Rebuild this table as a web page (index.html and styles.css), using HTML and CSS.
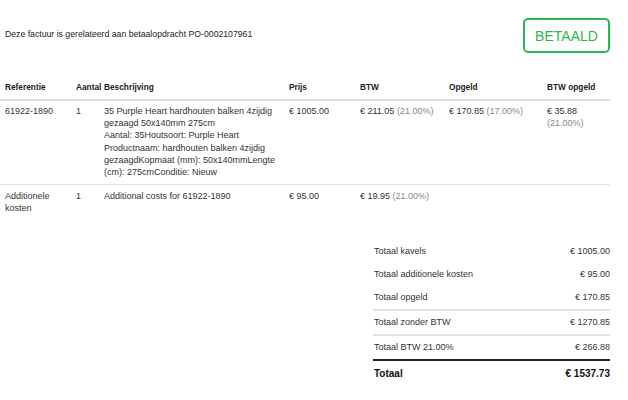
FILE: index.html
```html
<!DOCTYPE html>
<html lang="nl">
<head>
  <meta charset="UTF-8">
  <meta name="viewport" content="width=device-width, initial-scale=1.0">
  <title>Factuur</title>
  <link rel="stylesheet" href="styles.css">
</head>
<body>
  <div class="invoice">
    <div class="invoice-head">
      <p class="related">Deze factuur is gerelateerd aan betaalopdracht PO-0002107961</p>
      <div class="status">BETAALD</div>
    </div>

    <table class="lines">
      <colgroup>
        <col class="c-ref">
        <col class="c-qty">
        <col class="c-desc">
        <col class="c-price">
        <col class="c-vat">
        <col class="c-fee">
        <col class="c-feevat">
      </colgroup>
      <thead>
        <tr>
          <th>Referentie</th>
          <th>Aantal</th>
          <th>Beschrijving</th>
          <th>Prijs</th>
          <th>BTW</th>
          <th>Opgeld</th>
          <th>BTW opgeld</th>
        </tr>
      </thead>
      <tbody>
        <tr>
          <td>61922-1890</td>
          <td>1</td>
          <td>35 Purple Heart hardhouten balken 4zijdig gezaagd 50x140mm 275cm<br>Aantal: 35Houtsoort: Purple Heart Productnaam: hardhouten balken 4zijdig gezaagdKopmaat (mm): 50x140mmLengte (cm): 275cmConditie: Nieuw</td>
          <td>€ 1005.00</td>
          <td>€ 211.05 <span class="pct">(21.00%)</span></td>
          <td>€ 170.85 <span class="pct">(17.00%)</span></td>
          <td>€ 35.88 <span class="pct">(21.00%)</span></td>
        </tr>
        <tr>
          <td>Additionele kosten</td>
          <td>1</td>
          <td>Additional costs for 61922-1890</td>
          <td>€ 95.00</td>
          <td>€ 19.95 <span class="pct">(21.00%)</span></td>
          <td></td>
          <td></td>
        </tr>
      </tbody>
    </table>

    <div class="totals">
      <div class="total-row"><span>Totaal kavels</span><span>€ 1005.00</span></div>
      <div class="total-row"><span>Totaal additionele kosten</span><span>€ 95.00</span></div>
      <div class="total-row"><span>Totaal opgeld</span><span>€ 170.85</span></div>
      <div class="total-row split"><span>Totaal zonder BTW</span><span>€ 1270.85</span></div>
      <div class="total-row split"><span>Totaal BTW 21.00%</span><span>€ 266.88</span></div>
      <div class="total-row grand"><span>Totaal</span><span>€ 1537.73</span></div>
    </div>
  </div>
</body>
</html>
```

FILE: styles.css
```css
/* Algemeen */
* {
  margin: 0;
  padding: 0;
  box-sizing: border-box;
}

body {
  font-family: 'Liberation Sans', Arial, sans-serif;
  font-size: 9px;
  color: #333;
  background: #fff;
}

.invoice {
  width: 610px;
}

/* Kop */
.invoice-head {
  display: flex;
  justify-content: space-between;
  align-items: center;
  padding: 18px 0 0 5px;
}

.related {
  font-size: 8.7px;
  color: #222;
  margin-top: -3px;
}

.status {
  width: 87px;
  height: 35px;
  display: flex;
  align-items: center;
  justify-content: center;
  border: 2px solid #2fb54f;
  border-radius: 5px;
  color: #2fb54f;
  font-size: 14px;
}

/* Regels */
.lines {
  width: 610px;
  margin-top: 23px;
  border-collapse: collapse;
  table-layout: fixed;
}

.c-ref { width: 71px; }
.c-qty { width: 28px; }
.c-desc { width: 185px; }
.c-price { width: 71px; }
.c-vat { width: 89px; }
.c-fee { width: 98px; }
.c-feevat { width: 68px; }

.lines th {
  text-align: left;
  font-size: 8.3px;
  font-weight: bold;
  color: #222;
  line-height: 12px;
  padding: 5px 0 6px 5px;
  border-bottom: 2px solid #dedede;
  white-space: nowrap;
}

.lines td {
  vertical-align: top;
  line-height: 12.2px;
  padding: 4px 4px 6px 5px;
  color: #333;
}

.lines tbody tr + tr td {
  border-top: 1px solid #e4e4e4;
  padding-top: 5px;
}

.pct {
  color: #888;
}

/* Totalen */
.totals {
  width: 237px;
  margin: 19px 0 0 auto;
}

.total-row {
  display: flex;
  justify-content: space-between;
  line-height: 11px;
  padding: 6px 0 6px 1px;
  color: #333;
}

.total-row.split {
  border-top: 2px solid #e2e2e2;
}

.total-row.grand {
  border-top: 2px solid #222;
  padding-top: 7px;
  font-size: 10px;
  font-weight: bold;
  color: #111;
}
```
